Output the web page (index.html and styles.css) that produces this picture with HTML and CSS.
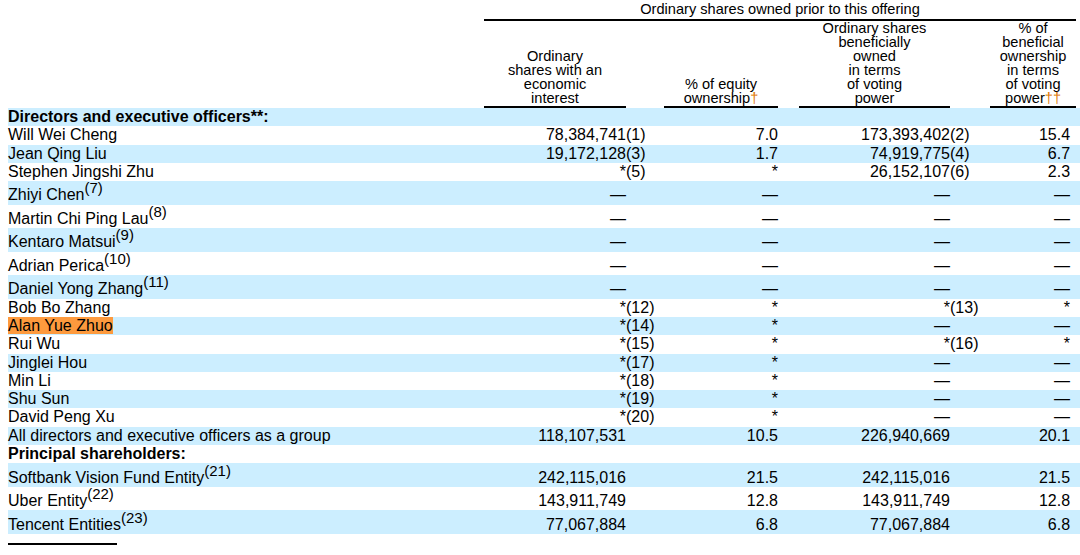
FILE: index.html
```html
<!DOCTYPE html>
<html>
<head>
<meta charset="utf-8">
<title>Ordinary shares</title>
<link rel="stylesheet" href="styles.css">
</head>
<body>
<table class="own">
  <colgroup>
    <col class="w-label"><col class="w-n1"><col class="w-f1"><col class="w-n2"><col class="w-f2"><col class="w-n3"><col class="w-f3"><col class="w-n4"><col class="w-f4">
  </colgroup>
  <thead>
    <tr class="h1">
      <td></td>
      <td colspan="7" class="grp">Ordinary shares owned prior to this offering</td>
      <td></td>
    </tr>
    <tr class="h2">
      <td></td>
      <td class="ch">Ordinary<br>shares with an<br>economic<br>interest</td>
      <td></td>
      <td class="ch">% of equity<br>ownership<span class="dg">†</span></td>
      <td></td>
      <td class="ch">Ordinary shares<br>beneficially<br>owned<br>in terms<br>of voting<br>power</td>
      <td></td>
      <td class="ch">% of<br>beneficial<br>ownership<br>in terms<br>of voting<br>power<span class="dg">††</span></td>
      <td></td>
    </tr>
  </thead>
  <tbody>
    <tr><td class="lbl bold">Directors and executive officers**:</td><td></td><td></td><td></td><td></td><td></td><td></td><td></td><td></td></tr>
    <tr><td class="lbl">Will Wei Cheng</td><td class="n">78,384,741</td><td class="f">(1)</td><td class="n">7.0</td><td></td><td class="n">173,393,402</td><td class="f">(2)</td><td class="n n4">15.4</td><td></td></tr>
    <tr><td class="lbl">Jean Qing Liu</td><td class="n">19,172,128</td><td class="f">(3)</td><td class="n">1.7</td><td></td><td class="n">74,919,775</td><td class="f">(4)</td><td class="n n4">6.7</td><td></td></tr>
    <tr><td class="lbl">Stephen Jingshi Zhu</td><td class="n">*</td><td class="f">(5)</td><td class="n">*</td><td></td><td class="n">26,152,107</td><td class="f">(6)</td><td class="n n4">2.3</td><td></td></tr>
    <tr class="s"><td class="lbl">Zhiyi Chen<sup>(7)</sup></td><td class="n">—</td><td></td><td class="n">—</td><td></td><td class="n">—</td><td></td><td class="n n4">—</td><td></td></tr>
    <tr class="s"><td class="lbl">Martin Chi Ping Lau<sup>(8)</sup></td><td class="n">—</td><td></td><td class="n">—</td><td></td><td class="n">—</td><td></td><td class="n n4">—</td><td></td></tr>
    <tr class="s"><td class="lbl">Kentaro Matsui<sup>(9)</sup></td><td class="n">—</td><td></td><td class="n">—</td><td></td><td class="n">—</td><td></td><td class="n n4">—</td><td></td></tr>
    <tr class="s"><td class="lbl">Adrian Perica<sup>(10)</sup></td><td class="n">—</td><td></td><td class="n">—</td><td></td><td class="n">—</td><td></td><td class="n n4">—</td><td></td></tr>
    <tr class="s"><td class="lbl">Daniel Yong Zhang<sup>(11)</sup></td><td class="n">—</td><td></td><td class="n">—</td><td></td><td class="n">—</td><td></td><td class="n n4">—</td><td></td></tr>
    <tr><td class="lbl">Bob Bo Zhang</td><td class="n">*</td><td class="f">(12)</td><td class="n">*</td><td></td><td class="n">*</td><td class="f">(13)</td><td class="n n4">*</td><td></td></tr>
    <tr><td class="lbl"><span class="hl">Alan Yue Zhuo</span></td><td class="n">*</td><td class="f">(14)</td><td class="n">*</td><td></td><td class="n">—</td><td></td><td class="n n4">—</td><td></td></tr>
    <tr><td class="lbl">Rui Wu</td><td class="n">*</td><td class="f">(15)</td><td class="n">*</td><td></td><td class="n">*</td><td class="f">(16)</td><td class="n n4">*</td><td></td></tr>
    <tr><td class="lbl">Jinglei Hou</td><td class="n">*</td><td class="f">(17)</td><td class="n">*</td><td></td><td class="n">—</td><td></td><td class="n n4">—</td><td></td></tr>
    <tr><td class="lbl">Min Li</td><td class="n">*</td><td class="f">(18)</td><td class="n">*</td><td></td><td class="n">—</td><td></td><td class="n n4">—</td><td></td></tr>
    <tr><td class="lbl">Shu Sun</td><td class="n">*</td><td class="f">(19)</td><td class="n">*</td><td></td><td class="n">—</td><td></td><td class="n n4">—</td><td></td></tr>
    <tr><td class="lbl">David Peng Xu</td><td class="n">*</td><td class="f">(20)</td><td class="n">*</td><td></td><td class="n">—</td><td></td><td class="n n4">—</td><td></td></tr>
    <tr><td class="lbl">All directors and executive officers as a group</td><td class="n">118,107,531</td><td></td><td class="n">10.5</td><td></td><td class="n">226,940,669</td><td></td><td class="n n4">20.1</td><td></td></tr>
    <tr><td class="lbl bold">Principal shareholders:</td><td></td><td></td><td></td><td></td><td></td><td></td><td></td><td></td></tr>
    <tr class="s"><td class="lbl">Softbank Vision Fund Entity<sup>(21)</sup></td><td class="n">242,115,016</td><td></td><td class="n">21.5</td><td></td><td class="n">242,115,016</td><td></td><td class="n n4">21.5</td><td></td></tr>
    <tr class="s"><td class="lbl">Uber Entity<sup>(22)</sup></td><td class="n">143,911,749</td><td></td><td class="n">12.8</td><td></td><td class="n">143,911,749</td><td></td><td class="n n4">12.8</td><td></td></tr>
    <tr class="s"><td class="lbl">Tencent Entities<sup>(23)</sup></td><td class="n">77,067,884</td><td></td><td class="n">6.8</td><td></td><td class="n">77,067,884</td><td></td><td class="n n4">6.8</td><td></td></tr>
  </tbody>
</table>
<div class="rule"></div>
</body>
</html>
```

FILE: styles.css
```css
html, body {
  background: #fff;
}
body {
  margin: 0;
  padding: 2px 0 0 8px;
  font-family: "Liberation Sans", Arial, sans-serif;
  color: #000;
}
.own {
  border-collapse: separate;
  border-spacing: 0;
  table-layout: fixed;
  width: 1072px;
  font-size: 16px;
  line-height: 18.3px;
}
.w-label { width: 476px; }
.w-n1 { width: 142px; }
.w-f1 { width: 38px; }
.w-n2 { width: 114px; }
.w-f2 { width: 21px; }
.w-n3 { width: 151px; }
.w-f3 { width: 40px; }
.w-n4 { width: 86px; }
.w-f4 { width: 4px; }

.own td {
  padding: 0;
  white-space: nowrap;
  vertical-align: bottom;
}
.own thead td {
  font-size: 14.6px;
  line-height: 14px;
  text-align: center;
}
.own .h1 td {
  height: 17px;
  line-height: 15px;
  vertical-align: top;
}
.own .h1 .grp {
  border-bottom: 2px solid #000;
}
.own .h2 .ch {
  border-bottom: 2px solid #000;
  padding-bottom: 1px;
}
.dg {
  color: #e07a06;
}
.own tbody tr:nth-child(odd) td {
  background: #cceeff;
}
.own tbody tr.s td {
  height: 23.5px;
}
.lbl {
  text-align: left;
}
.bold {
  font-weight: bold;
}
.n {
  text-align: right;
}
.own td.n4 {
  padding-right: 6px;
}
.f {
  text-align: left;
}
sup {
  font-size: 15px;
  line-height: 0;
  vertical-align: 7px;
}
.hl {
  background: #fd9a3e;
}
.rule {
  width: 109px;
  height: 2px;
  background: #000;
  margin-top: 9px;
}
```
